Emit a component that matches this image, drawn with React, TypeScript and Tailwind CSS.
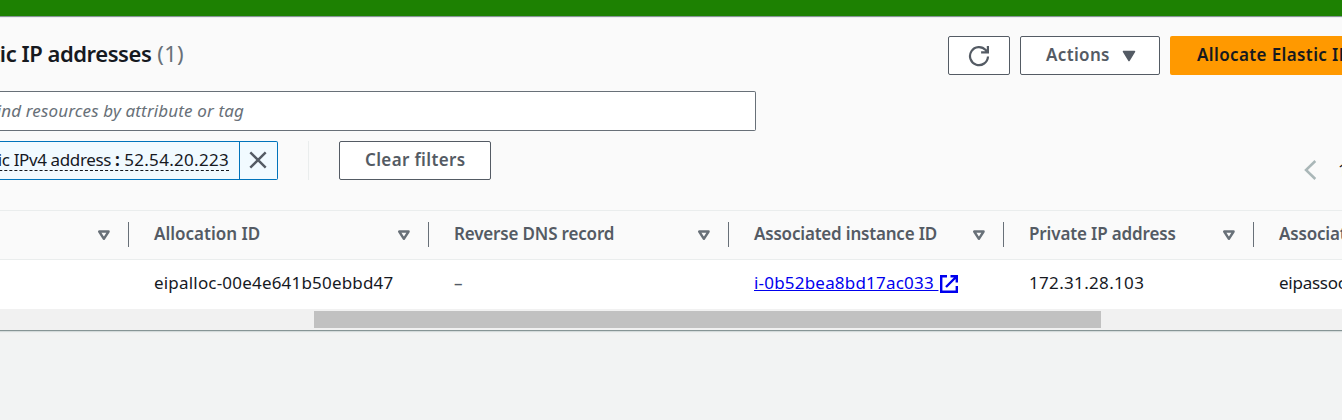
import type { ReactNode } from "react";

function SortIcon() {
  return (
    <svg width="13" height="12" viewBox="0 0 13 12" className="shrink-0" fill="none" stroke="#687078" strokeWidth="2.4" strokeLinejoin="round">
      <path d="M2.2 2.5h9.4L6.9 9.8z" />
    </svg>
  );
}

function ExternalIcon() {
  return (
    <svg width="20" height="20" viewBox="0 0 20 20" className="mt-[2px] shrink-0" fill="none" stroke="#0000ee" strokeWidth="2.4">
      <path d="M8 2.2H2.2v15.6h15.6V12M11.5 2.2h6.3v6.3M17.5 2.5L7 13" />
    </svg>
  );
}

type Column = { title: string; value: ReactNode; width: string; titleSpacing: string };

const columns: Column[] = [
  {
    title: "Allocation ID",
    value: <span className="tracking-[0.19px]">eipalloc-00e4e641b50ebbd47</span>,
    width: "w-[300px]",
    titleSpacing: "tracking-[0px]",
  },
  {
    title: "Reverse DNS record",
    value: <span className="font-medium text-[#545b64]">–</span>,
    width: "w-[300px]",
    titleSpacing: "tracking-[-0.17px]",
  },
  {
    title: "Associated instance ID",
    value: (
      <a className="flex items-center text-[#0000ee]">
        <span className="w-[185px] whitespace-pre underline tracking-[0.2px]">{"i-0b52bea8bd17ac033 "}</span>
        <ExternalIcon />
      </a>
    ),
    width: "w-[275px]",
    titleSpacing: "tracking-[-0.19px]",
  },
  {
    title: "Private IP address",
    value: <span className="tracking-[0.33px]">172.31.28.103</span>,
    width: "w-[250px]",
    titleSpacing: "tracking-[-0.14px]",
  },
  {
    title: "Associated",
    value: <span className="tracking-[-0.25px]">eipassoc-</span>,
    width: "w-[250px]",
    titleSpacing: "tracking-[-0.17px]",
  },
];

export default function App() {
  return (
    <div className="flex h-[420px] w-[1342px] flex-col overflow-hidden whitespace-nowrap bg-[#f2f3f3] font-['Noto_Sans',sans-serif] text-[17px] leading-6 text-[#16191f]">
      <div className="h-4 shrink-0 bg-[#1d8102]" />
      <main className="flex h-[315px] shrink-0 flex-col border-t border-b border-t-[#879596] border-b-[#879596] bg-[#fafafa] shadow-[0_1px_1px_#d5dbdb]">
        <header className="flex h-[74px] shrink-0 items-start border-t border-[#eaeded] pt-[18px]">
          <h1 className="flex h-[34px] w-[184px] items-center justify-end gap-[6px] text-[22px] font-semibold">
            <span className="tracking-[-0.45px]">Elastic IP addresses</span>
            <span className="font-normal tracking-[0.3px] text-[#687078]">(1)</span>
          </h1>
          <div className="ml-[764px] flex h-[39px] shrink-0 gap-[10px] font-semibold text-[#545b64]">
            <button className="flex w-[62px] items-center justify-center rounded-[2px] border border-[#545b64] bg-white">
              <svg width="22" height="22" viewBox="0 0 22 22" fill="none" stroke="#545b64" strokeWidth="2.2">
                <path d="M20 11.5a9 9 0 1 1-2.3-6.4L19.3 7M19.9 1v6.3h-6.8" />
              </svg>
            </button>
            <button className="flex w-[140px] items-center rounded-[2px] border border-[#545b64] bg-white pl-[25px]">
              <span className="w-[76px] pb-[2px] text-left tracking-[0.35px]">Actions</span>
              <svg width="14" height="12" viewBox="0 0 14 12" fill="#545b64" stroke="#545b64" strokeWidth="1.5" strokeLinejoin="round">
                <path d="M1.5 1.5h11L7 10.5z" />
              </svg>
            </button>
            <button className="flex w-[270px] items-center rounded-[2px] bg-[#ff9900] pb-[2px] pl-[27px] tracking-[0.38px] text-[#16191f]">
              Allocate Elastic IP address
            </button>
          </div>
        </header>
        <div className="flex h-10 w-[756px] shrink-0 rounded-r-[2px] border border-l-0 border-[#687078] bg-white">
          <div className="flex w-[244px] items-center justify-end italic tracking-[0.14px] text-[#687078]">
            <span>Find resources by attribute or tag</span>
          </div>
        </div>
        <div className="flex h-[79px] shrink-0 pt-[10px]">
          <div className="flex h-[39px] w-[278px] shrink-0 rounded-r-[2px] border border-l-0 border-[#0073bb] bg-[#f1faff]">
            <div className="flex w-[239px] items-center justify-end pr-[10px] pb-px">
              <span className="border-b border-dashed border-[#16191f] leading-[21px]">
                <span className="tracking-[-0.38px]">Public IPv4 address </span>
                <b>:</b> <span className="tracking-[0.3px]">52.54.20.223</span>
              </span>
            </div>
            <div className="flex flex-1 items-center justify-center border-l border-[#0073bb] pr-px pb-[2px]">
              <svg width="18" height="18" viewBox="0 0 18 18" stroke="#545b64" strokeWidth="2.4">
                <path d="M1.3 1.3l15.4 15.4M16.7 1.3L1.3 16.7" />
              </svg>
            </div>
          </div>
          <div className="ml-[30px] h-[39px] w-px shrink-0 bg-[#eaeded]" />
          <button className="ml-[30px] flex h-[39px] w-[152px] shrink-0 items-center rounded-[2px] border border-[#545b64] bg-white pb-px pl-[25px] font-semibold tracking-[0.35px] text-[#545b64]">
            Clear filters
          </button>
          <div className="ml-[812px] flex h-[39px] shrink-0 items-center pt-[19px]">
            <svg width="14" height="20" viewBox="0 0 14 20" fill="none" stroke="#aab7b8" strokeWidth="2.5">
              <path d="M12.3 1L3 10l9.3 9" />
            </svg>
            <span className="ml-[21px]">1</span>
          </div>
        </div>
        <section className="flex shrink-0 border-t border-[#eaeded]">
          <div className="w-[129px] shrink-0">
            <div className="flex h-[49px] items-center justify-end border-b border-[#eaeded] pb-px">
              <SortIcon />
              <span className="ml-[18px] h-[25px] w-px bg-[#687078]" />
            </div>
            <div className="h-[49px] bg-white" />
          </div>
          {columns.map((column) => (
            <div key={column.title} className={`shrink-0 ${column.width}`}>
              <div className="flex h-[49px] items-center border-b border-[#eaeded] pb-px pl-[25px] font-semibold text-[#545b64]">
                <span className={`flex-1 pb-[2px] ${column.titleSpacing}`}>{column.title}</span>
                <SortIcon />
                <span className="ml-[18px] h-[25px] w-px bg-[#687078]" />
              </div>
              <div className="flex h-[49px] items-center bg-white pb-[3px] pl-[25px]">{column.value}</div>
            </div>
          ))}
        </section>
        <div className="flex flex-1 items-center bg-[#f1f1f1]">
          <div className="ml-[314px] h-[17px] w-[787px] bg-[#c1c1c1]" />
        </div>
      </main>
    </div>
  );
}
